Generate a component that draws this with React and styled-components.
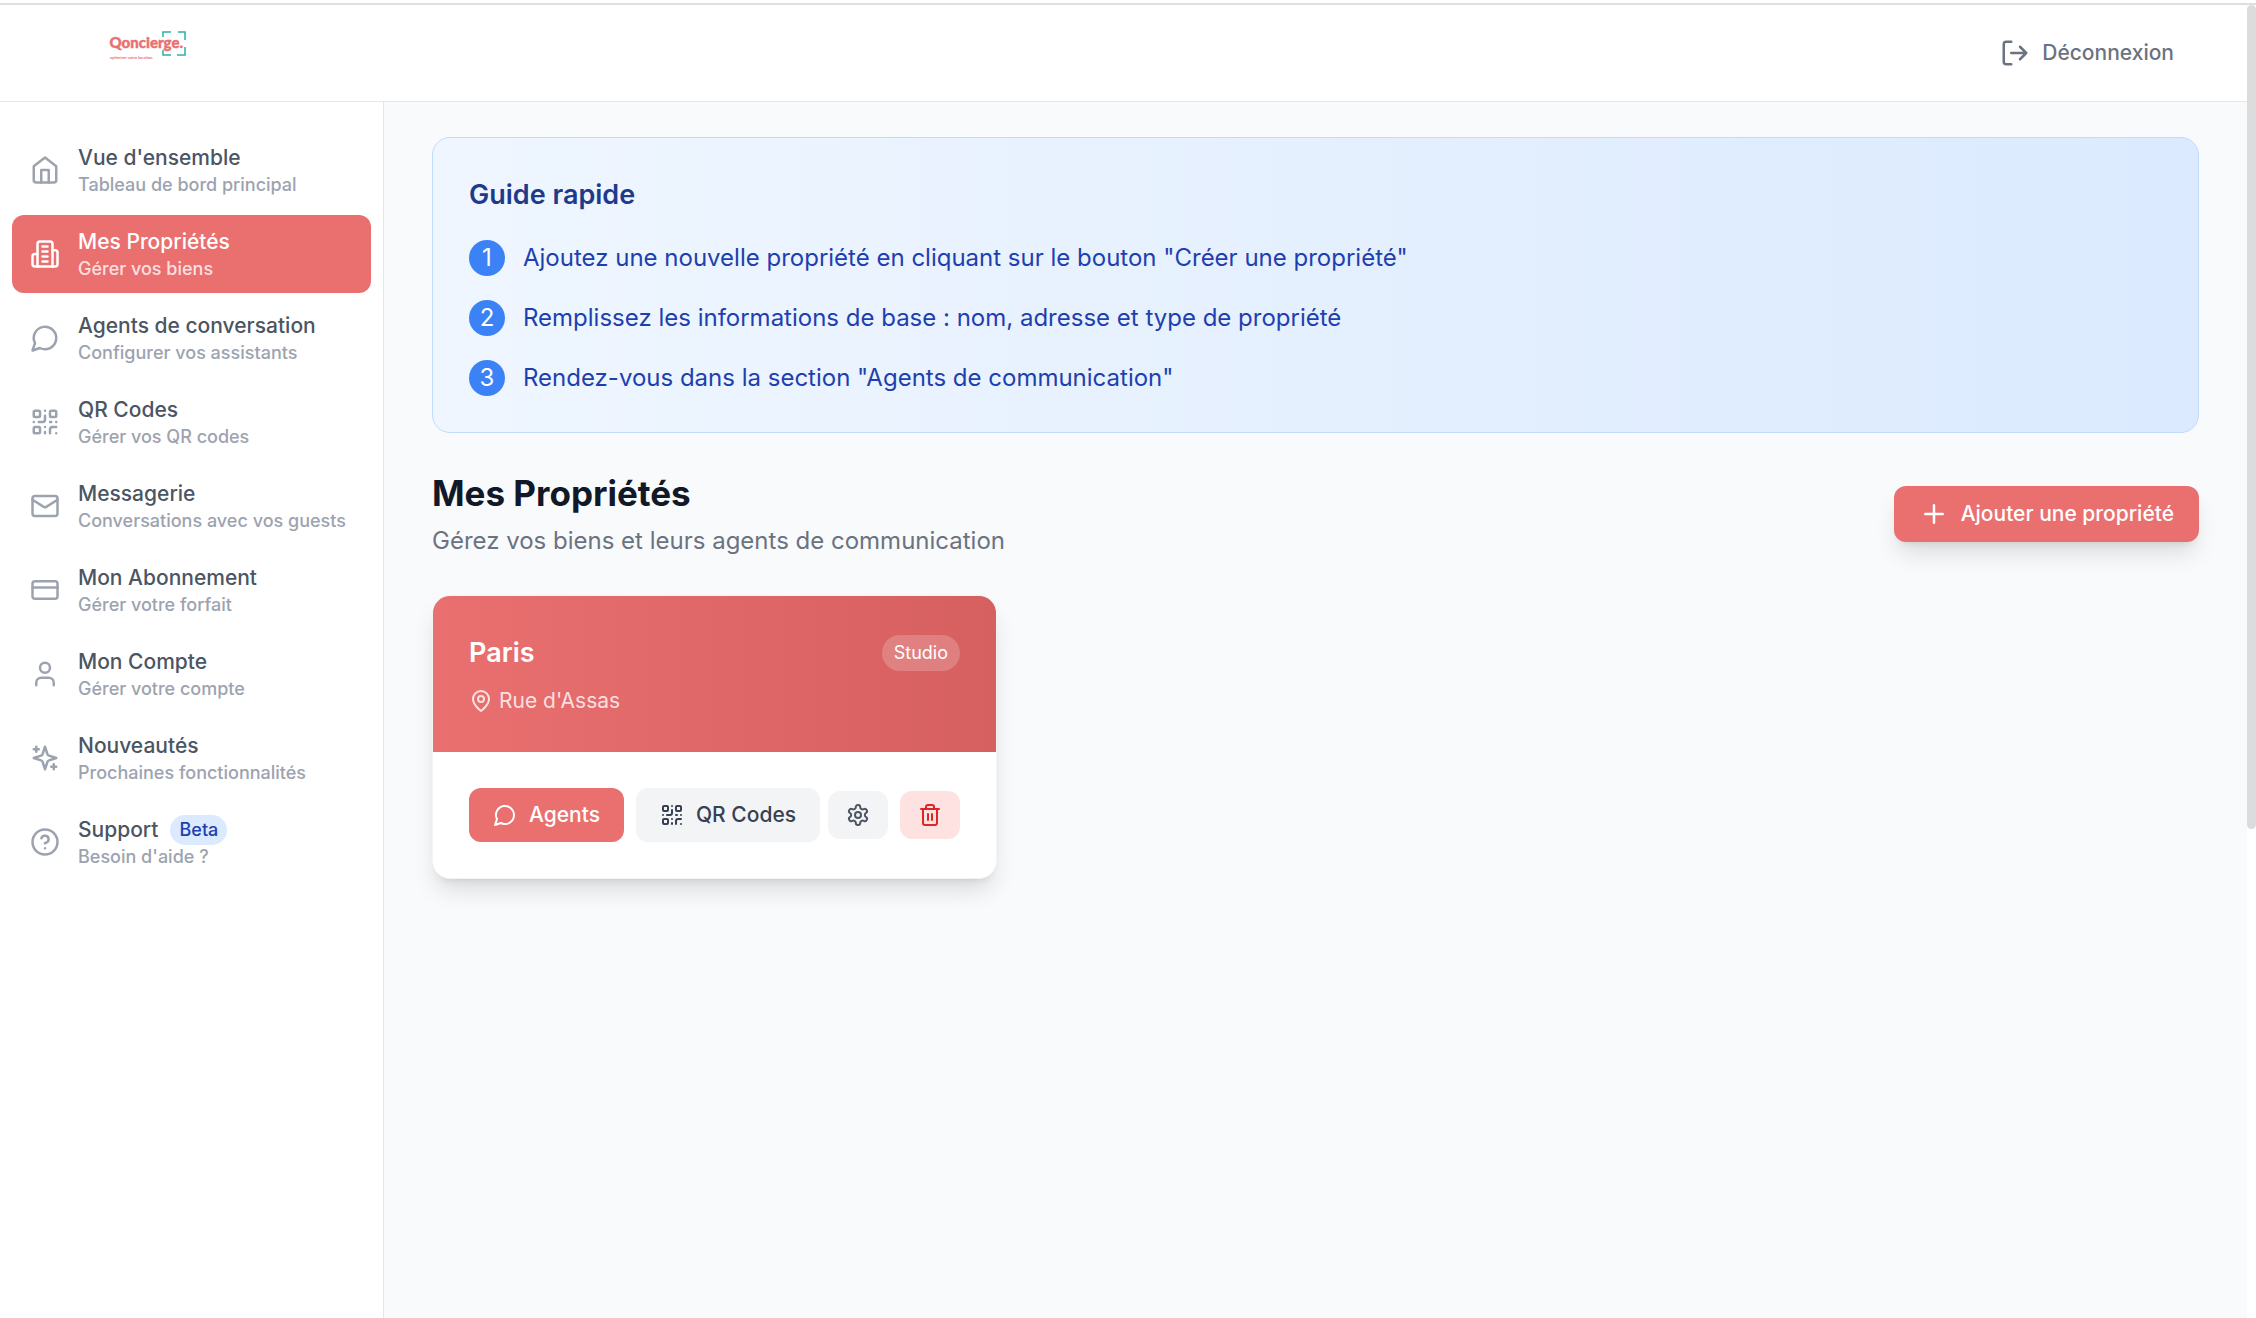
import React from "react";
import styled, { createGlobalStyle, css } from "styled-components";

const GlobalStyle = createGlobalStyle`
  *, *::before, *::after { box-sizing: border-box; }
  body {
    margin: 0;
    background: #fff;
    font-family: Inter, "Liberation Sans", sans-serif;
    font-size: 21px;
    line-height: 30px;
    color: #111827;
  }
  h1, h2, h3, p, ol, ul { margin: 0; padding: 0; }
  ol, ul { list-style: none; }
  button { font: inherit; border: 0; cursor: pointer; }
  a { color: inherit; text-decoration: none; }
`;

const coral = "#ea7070";

/* ---------- Icons ---------- */

const IconSvg = styled.svg`
  display: block;
  flex: none;
  width: ${(p) => p.$size}px;
  height: ${(p) => p.$size}px;
  fill: none;
  stroke: currentColor;
  stroke-width: ${(p) => p.$stroke};
  stroke-linecap: round;
  stroke-linejoin: round;
`;

const shapes = {
  home: (
    <>
      <path d="m3 9 9-7 9 7v11a2 2 0 0 1-2 2H5a2 2 0 0 1-2-2z" />
      <path d="M9 22V12h6v10" />
    </>
  ),
  building: (
    <>
      <path d="M6 22V4a2 2 0 0 1 2-2h8a2 2 0 0 1 2 2v18Z" />
      <path d="M6 12H4a2 2 0 0 0-2 2v6a2 2 0 0 0 2 2h2" />
      <path d="M18 9h2a2 2 0 0 1 2 2v9a2 2 0 0 1-2 2h-2" />
      <path d="M10 6h4M10 10h4M10 14h4M10 18h4" />
    </>
  ),
  chat: <path d="M7.9 20A9 9 0 1 0 4 16.1L2 22Z" />,
  qr: (
    <>
      <rect x="3" y="3" width="5" height="5" rx="1" />
      <rect x="16" y="3" width="5" height="5" rx="1" />
      <rect x="3" y="16" width="5" height="5" rx="1" />
      <path d="M21 16h-3a2 2 0 0 0-2 2v3M21 21v.01M12 7v3a2 2 0 0 1-2 2H7M3 12h.01M12 3h.01M12 16v.01M16 12h1M21 12v.01M12 21v-1" />
    </>
  ),
  mail: (
    <>
      <rect x="2" y="4" width="20" height="16" rx="2" />
      <path d="m22 7-8.97 5.7a1.94 1.94 0 0 1-2.06 0L2 7" />
    </>
  ),
  card: (
    <>
      <rect x="2" y="5" width="20" height="14" rx="2" />
      <path d="M2 10h20" />
    </>
  ),
  user: (
    <>
      <path d="M19 21v-2a4 4 0 0 0-4-4H9a4 4 0 0 0-4 4v2" />
      <circle cx="12" cy="7" r="4" />
    </>
  ),
  sparkles: (
    <>
      <path d="m12 3-1.912 5.813a2 2 0 0 1-1.275 1.275L3 12l5.813 1.912a2 2 0 0 1 1.275 1.275L12 21l1.912-5.813a2 2 0 0 1 1.275-1.275L21 12l-5.813-1.912a2 2 0 0 1-1.275-1.275L12 3Z" />
      <path d="M5 3v4M19 17v4M3 5h4M17 19h4" />
    </>
  ),
  help: (
    <>
      <circle cx="12" cy="12" r="10" />
      <path d="M9.09 9a3 3 0 0 1 5.83 1c0 2-3 3-3 3M12 17h.01" />
    </>
  ),
  logout: (
    <>
      <path d="M9 21H5a2 2 0 0 1-2-2V5a2 2 0 0 1 2-2h4" />
      <path d="m16 17 5-5-5-5M21 12H9" />
    </>
  ),
  plus: <path d="M5 12h14M12 5v14" />,
  pin: (
    <>
      <path d="M20 10c0 6-8 12-8 12s-8-6-8-12a8 8 0 0 1 16 0Z" />
      <circle cx="12" cy="10" r="3" />
    </>
  ),
  settings: (
    <>
      <path d="M12.22 2h-.44a2 2 0 0 0-2 2v.18a2 2 0 0 1-1 1.73l-.43.25a2 2 0 0 1-2 0l-.15-.08a2 2 0 0 0-2.73.73l-.22.38a2 2 0 0 0 .73 2.73l.15.1a2 2 0 0 1 1 1.72v.51a2 2 0 0 1-1 1.74l-.15.09a2 2 0 0 0-.73 2.73l.22.38a2 2 0 0 0 2.73.73l.15-.08a2 2 0 0 1 2 0l.43.25a2 2 0 0 1 1 1.73V20a2 2 0 0 0 2 2h.44a2 2 0 0 0 2-2v-.18a2 2 0 0 1 1-1.73l.43-.25a2 2 0 0 1 2 0l.15.08a2 2 0 0 0 2.73-.73l.22-.39a2 2 0 0 0-.73-2.73l-.15-.08a2 2 0 0 1-1-1.74v-.5a2 2 0 0 1 1-1.74l.15-.09a2 2 0 0 0 .73-2.73l-.22-.38a2 2 0 0 0-2.73-.73l-.15.08a2 2 0 0 1-2 0l-.43-.25a2 2 0 0 1-1-1.73V4a2 2 0 0 0-2-2z" />
      <circle cx="12" cy="12" r="3" />
    </>
  ),
  trash: (
    <>
      <path d="M3 6h18M19 6v14c0 1-1 2-2 2H7c-1 0-2-1-2-2V6M8 6V4c0-1 1-2 2-2h4c1 0 2 1 2 2v2" />
      <path d="M10 11v6M14 11v6" />
    </>
  ),
};

function Icon({ name, size = 30, stroke = 2 }) {
  return (
    <IconSvg viewBox="0 0 24 24" $size={size} $stroke={stroke} aria-hidden="true">
      {shapes[name]}
    </IconSvg>
  );
}

/* ---------- Shell ---------- */

const Window = styled.div`
  display: grid;
  grid-template-columns: minmax(0, 1fr) 9px;
  grid-template-rows: auto 1fr;
  min-height: 100vh;
`;

const TopEdge = styled.div`
  grid-column: 1 / -1;
  height: 5px;
  border-bottom: 2px solid #dedede;
`;

const Page = styled.div`
  display: flex;
  flex-direction: column;
`;

const ScrollTrack = styled.div`
  background: #fff;
`;

const ScrollThumb = styled.div`
  height: 62.75%;
  border-radius: 5px;
  background: #dcdcdc;
`;

const Header = styled.header`
  display: flex;
  align-items: center;
  justify-content: space-between;
  height: 97px;
  padding: 0 49px 0 108px;
  border-bottom: 1px solid #e5e7eb;
  background: #fff;
`;

const LogoLink = styled.a`
  display: block;
  padding-bottom: 16px;
`;

const LogoSvg = styled.svg`
  display: block;
  width: 80px;
  height: 32px;
`;

const LogoutButton = styled.button`
  display: flex;
  align-items: center;
  gap: 12px;
  padding: 12px 24px;
  border-radius: 12px;
  background: transparent;
  color: #6b7280;
  font-weight: 500;
`;

const Body = styled.div`
  display: flex;
  flex: 1;
`;

/* ---------- Sidebar ---------- */

const Sidebar = styled.aside`
  flex: none;
  width: 384px;
  padding: 29px 12px;
  border-right: 1px solid #e5e7eb;
  background: #fff;
`;

const NavList = styled.ul`
  display: flex;
  flex-direction: column;
  gap: 6px;
`;

const NavLabel = styled.span`
  display: flex;
  align-items: center;
  gap: 12px;
  color: #4b5563;
`;

const NavHint = styled.span`
  display: block;
  font-size: 18px;
  line-height: 24px;
  color: #9ca3af;
`;

const NavLink = styled.a`
  display: flex;
  align-items: center;
  gap: 18px;
  padding: 12px 18px;
  border-radius: 12px;
  color: #9ca3af;
  font-weight: 500;

  ${(p) =>
    p.$active &&
    css`
      background: ${coral};
      color: #fff;

      ${NavLabel} {
        color: #fff;
      }
      ${NavHint} {
        color: rgba(255, 255, 255, 0.8);
      }
    `}
`;

const BetaBadge = styled.span`
  padding: 3px 9px;
  border-radius: 15px;
  background: #dbeafe;
  color: #1e40af;
  font-size: 18px;
  line-height: 24px;
`;

/* ---------- Main ---------- */

const Main = styled.main`
  display: flex;
  flex: 1;
  flex-direction: column;
  gap: 36px;
  min-width: 0;
  padding: 35px 48px 36px;
  background: #f9fafc;
`;

const Guide = styled.section`
  padding: 36px;
  border: 1px solid #bfdbfe;
  border-radius: 18px;
  background: linear-gradient(to right, #eff6ff, #dbeafe);
`;

const GuideTitle = styled.h2`
  margin-bottom: 24px;
  color: #1e3a8a;
  font-size: 27px;
  font-weight: 600;
  line-height: 42px;
`;

const Steps = styled.ol`
  display: flex;
  flex-direction: column;
  gap: 24px;
`;

const Step = styled.li`
  display: flex;
  align-items: center;
  gap: 18px;
  color: #1e40af;
  font-size: 24px;
  line-height: 36px;
`;

const StepNumber = styled.span`
  flex: none;
  width: 36px;
  height: 36px;
  border-radius: 50%;
  background: #3b82f6;
  color: #fff;
  text-align: center;
`;

const SectionHead = styled.div`
  display: flex;
  align-items: center;
  justify-content: space-between;
`;

const SectionTitle = styled.h1`
  font-size: 35px;
  font-weight: 700;
  line-height: 48px;
`;

const SectionText = styled.p`
  margin-top: 6px;
  color: #6b7280;
  font-size: 24px;
  line-height: 36px;
`;

const softShadow = "0 15px 23px -4px rgba(0, 0, 0, 0.12), 0 6px 9px -6px rgba(0, 0, 0, 0.12)";

const AddButton = styled.button`
  display: flex;
  align-items: center;
  gap: 12px;
  padding: 13px 25px;
  border-radius: 12px;
  background: ${coral};
  box-shadow: ${softShadow};
  color: #fff;
  font-weight: 500;
`;

const Cards = styled.div`
  display: grid;
  grid-template-columns: repeat(3, minmax(0, 1fr));
  gap: 36px;
`;

const Card = styled.article`
  overflow: hidden;
  border: 1px solid #f3f4f6;
  border-radius: 18px;
  background: #fff;
  box-shadow: ${softShadow};
`;

const CardHead = styled.div`
  padding: 36px;
  background: linear-gradient(to right, ${coral}, #d65f5f);
  color: #fff;
`;

const CardTitleRow = styled.div`
  display: flex;
  align-items: center;
  justify-content: space-between;
  margin-bottom: 12px;
`;

const CardTitle = styled.h3`
  font-size: 27px;
  font-weight: 600;
  line-height: 42px;
`;

const TypeBadge = styled.span`
  padding: 6px 12px;
  border-radius: 18px;
  background: rgba(255, 255, 255, 0.2);
  font-size: 18px;
  line-height: 24px;
`;

const Address = styled.p`
  display: flex;
  align-items: center;
  gap: 6px;
  color: rgba(255, 255, 255, 0.8);
`;

const CardActions = styled.div`
  display: flex;
  align-items: center;
  justify-content: space-between;
  padding: 36px;
`;

const ActionGroup = styled.div`
  display: flex;
  align-items: center;
  gap: 12px;
`;

const tones = {
  primary: css`
    background: ${coral};
    color: #fff;
  `,
  neutral: css`
    background: #f3f4f6;
    color: #374151;
  `,
  muted: css`
    background: #f3f4f6;
    color: #4b5563;
  `,
  danger: css`
    background: #fee2e2;
    color: #dc2626;
  `,
};

const ActionButton = styled.button`
  display: flex;
  align-items: center;
  gap: 12px;
  padding: 12px 24px;
  border-radius: 12px;
  font-weight: 500;
  ${(p) => tones[p.$tone]}
`;

const IconButton = styled.button`
  padding: 12px 18px;
  border-radius: 12px;
  ${(p) => tones[p.$tone]}
`;

/* ---------- Content ---------- */

const navItems = [
  { icon: "home", label: "Vue d'ensemble", hint: "Tableau de bord principal" },
  { icon: "building", label: "Mes Propriétés", hint: "Gérer vos biens", active: true },
  { icon: "chat", label: "Agents de conversation", hint: "Configurer vos assistants" },
  { icon: "qr", label: "QR Codes", hint: "Gérer vos QR codes" },
  { icon: "mail", label: "Messagerie", hint: "Conversations avec vos guests" },
  { icon: "card", label: "Mon Abonnement", hint: "Gérer votre forfait" },
  { icon: "user", label: "Mon Compte", hint: "Gérer votre compte" },
  { icon: "sparkles", label: "Nouveautés", hint: "Prochaines fonctionnalités" },
  { icon: "help", label: "Support", hint: "Besoin d'aide ?", badge: "Beta" },
];

const steps = [
  'Ajoutez une nouvelle propriété en cliquant sur le bouton "Créer une propriété"',
  "Remplissez les informations de base : nom, adresse et type de propriété",
  'Rendez-vous dans la section "Agents de communication"',
];

const properties = [{ name: "Paris", type: "Studio", address: "Rue d'Assas" }];

function Logo() {
  return (
    <LogoSvg viewBox="0 0 80 32" role="img" aria-label="Qoncierge">
      <path
        d="M55 8V3h8M70 3h7v8M77 18v8h-8M63 26h-8v-5"
        fill="none"
        stroke="#2fb0a3"
        strokeWidth="1.5"
      />
      <text
        x="1.5"
        y="18.5"
        fontFamily="Lato, sans-serif"
        fontWeight="900"
        fontSize="15"
        fill={coral}
        stroke={coral}
        strokeWidth="0.4"
      >
        Qoncierge.
      </text>
      <text x="2" y="29.5" fontFamily="Lato, sans-serif" fontWeight="700" fontSize="4" fill={coral}>
        optimiser votre location.
      </text>
    </LogoSvg>
  );
}

function PropertyCard({ name, type, address }) {
  return (
    <Card>
      <CardHead>
        <CardTitleRow>
          <CardTitle>{name}</CardTitle>
          <TypeBadge>{type}</TypeBadge>
        </CardTitleRow>
        <Address>
          <Icon name="pin" size={24} />
          {address}
        </Address>
      </CardHead>
      <CardActions>
        <ActionGroup>
          <ActionButton type="button" $tone="primary">
            <Icon name="chat" size={24} />
            Agents
          </ActionButton>
          <ActionButton type="button" $tone="neutral">
            <Icon name="qr" size={24} />
            QR Codes
          </ActionButton>
        </ActionGroup>
        <ActionGroup>
          <IconButton type="button" $tone="muted" aria-label="Paramètres">
            <Icon name="settings" size={24} />
          </IconButton>
          <IconButton type="button" $tone="danger" aria-label="Supprimer">
            <Icon name="trash" size={24} />
          </IconButton>
        </ActionGroup>
      </CardActions>
    </Card>
  );
}

export default function App() {
  return (
    <>
      <GlobalStyle />
      <Window>
        <TopEdge />
        <Page>
          <Header>
            <LogoLink href="#">
              <Logo />
            </LogoLink>
            <LogoutButton type="button">
              <Icon name="logout" />
              Déconnexion
            </LogoutButton>
          </Header>
          <Body>
            <Sidebar>
              <nav>
                <NavList>
                  {navItems.map((item) => (
                    <li key={item.label}>
                      <NavLink href="#" $active={item.active} aria-current={item.active ? "page" : undefined}>
                        <Icon name={item.icon} />
                        <span>
                          <NavLabel>
                            {item.label}
                            {item.badge && <BetaBadge>{item.badge}</BetaBadge>}
                          </NavLabel>
                          <NavHint>{item.hint}</NavHint>
                        </span>
                      </NavLink>
                    </li>
                  ))}
                </NavList>
              </nav>
            </Sidebar>
            <Main>
              <Guide>
                <GuideTitle>Guide rapide</GuideTitle>
                <Steps>
                  {steps.map((text, i) => (
                    <Step key={text}>
                      <StepNumber>{i + 1}</StepNumber>
                      {text}
                    </Step>
                  ))}
                </Steps>
              </Guide>
              <SectionHead>
                <div>
                  <SectionTitle>Mes Propriétés</SectionTitle>
                  <SectionText>Gérez vos biens et leurs agents de communication</SectionText>
                </div>
                <AddButton type="button">
                  <Icon name="plus" />
                  Ajouter une propriété
                </AddButton>
              </SectionHead>
              <Cards>
                {properties.map((property) => (
                  <PropertyCard key={property.name} {...property} />
                ))}
              </Cards>
            </Main>
          </Body>
        </Page>
        <ScrollTrack>
          <ScrollThumb />
        </ScrollTrack>
      </Window>
    </>
  );
}
